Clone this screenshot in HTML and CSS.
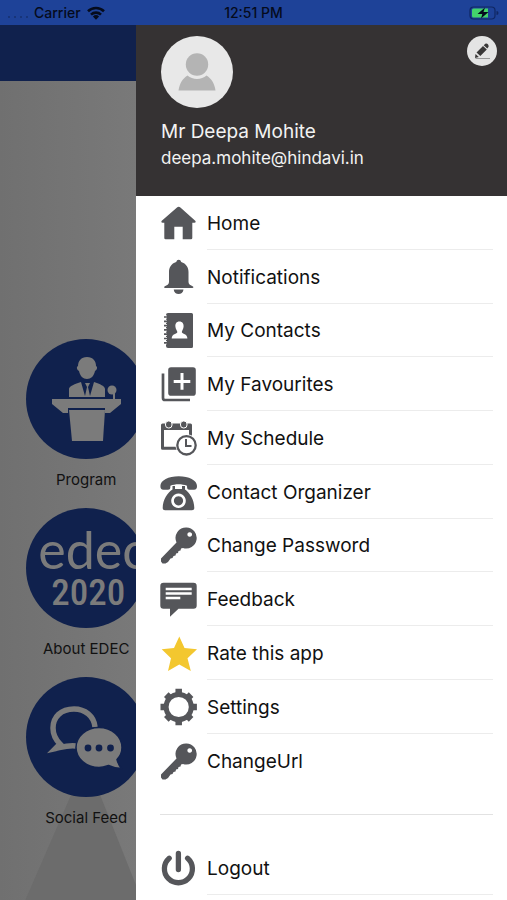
FILE: index.html
```html
<!DOCTYPE html>
<html lang="en">
<head>
    <meta charset="UTF-8">
    <meta name="viewport" content="width=device-width, initial-scale=1.0">
    <title>EDEC 2020</title>
    <link rel="stylesheet" href="styles.css">
</head>
<body>
    <svg class="defs" aria-hidden="true">
        <symbol id="icon-key" viewBox="0 0 38 38">
            <path fill-rule="evenodd" d="M26.500 1.500a10.500 10.500 0 1 1-3.500 20.500l-2 .5-.5 2-2 .5-.5 2-2 .5-.5 2-2 .5-1 2-2 .5-2.500 3.500-2.500 1.500H2.500L1 35.500v-3L16.500 16.500A10.500 10.500 0 0 1 26.500 1.500zM29.700 6.200a2.300 2.300 0 1 0 .01 0z"/>
        </symbol>
    </svg>

    <div class="status-bar">
        <div class="status-left">
            <span class="signal"><i></i><i></i><i></i><i></i></span>
            <span>Carrier</span>
            <svg class="wifi" viewBox="0 0 18 14">
                <path d="M1 5.300a11.500 11.500 0 0 1 16 0M4 8.600a7.200 7.200 0 0 1 10 0" fill="none" stroke="#050b1c" stroke-width="2.600"/>
                <path d="M5.900 10.500a4.500 4.500 0 0 1 6.200 0L9 13.800z" fill="#050b1c"/>
            </svg>
        </div>
        <span class="clock">12:51 PM</span>
        <div class="status-right">
            <svg class="battery" viewBox="0 0 30 14">
                <rect x="1" y="1" width="25" height="12" rx="3.500" fill="none" stroke="#102763" stroke-width="1.200"/>
                <path d="M4.500 2.500H19v9H4.500A1.500 1.500 0 0 1 3 10V4a1.500 1.500 0 0 1 1.500-1.500z" fill="#43d36b"/>
                <path d="M27.500 5v4a2 2 0 0 0 0-4z" fill="#102763"/>
                <path d="M16 1.500L8.500 8h4.800L12 12.500 19.500 6h-5z" fill="#050b1c"/>
            </svg>
        </div>
    </div>

    <div class="screen">
        <main class="home">
            <div class="home-header"></div>
            <div class="home-banner"></div>
            <div class="tiles">
                <a class="tile" href="#">
                    <span class="tile-circle">
                        <svg viewBox="0 0 120 120">
                            <path d="M61 18c6 0 9 4 9 9 2 1 1 4-1 5-1 5-4 8-8 8s-7-3-8-8c-2-1-3-4-1-5 0-5 3-9 9-9z"/>
                            <path d="M43 58V50c0-3 6-5 12-7l4 14 2-9-2-4h5l-2 4 2 9 4-14c6 2 11 4 11 7v8z"/>
                            <path d="M26 60h69v5l-11 9h-5v-5H42v5h-5l-11-9z"/>
                            <path d="M43 71h36l-2 31H46z"/>
                            <circle cx="86" cy="51" r="4.500"/>
                            <path d="M88 53v8" stroke="#7b7b7b" stroke-width="2"/>
                        </svg>
                    </span>
                    <span>Program</span>
                </a>
                <a class="tile" href="#">
                    <span class="tile-circle edec">
                        <span class="edec-name">edec</span>
                        <span class="edec-year">2020</span>
                    </span>
                    <span>About EDEC</span>
                </a>
                <a class="tile" href="#">
                    <span class="tile-circle">
                        <svg viewBox="0 0 120 120">
                            <path d="M69 50c-1-11-10-18-21-18-13 0-21 8-21 19 0 7 3 12 7 16l-4.500 4.500c7-1.500 13-3.500 20.500-2.500" fill="none" stroke="#7b7b7b" stroke-width="5.500"/>
                            <path d="M73 50.500c13 0 23 9 23 20 0 5-2 9-5 12 1 4 2 6 4.500 9-6 0-9-1-13-3-3 1-6 2-9.500 2-13 0-23-9-23-20s10-20 23-20z" stroke="#10214d" stroke-width="1.500"/>
                            <g fill="#10214d">
                                <circle cx="62" cy="71" r="3.400"/>
                                <circle cx="73" cy="71" r="3.400"/>
                                <circle cx="84.500" cy="71" r="3.400"/>
                            </g>
                        </svg>
                    </span>
                    <span>Social Feed</span>
                </a>
            </div>
        </main>

        <aside class="drawer">
            <header class="profile">
                <div class="profile-top">
                    <svg class="avatar" viewBox="0 0 72 72">
                        <circle cx="36" cy="36" r="36" fill="#e8e8e8"/>
                        <circle cx="36" cy="28.500" r="11.200" fill="#b4b4b4"/>
                        <path d="M17.500 54.500c1-7 4-12 9-15 5 4.500 14 4.500 19 0 5 3 8 8 9 15z" fill="#b4b4b4"/>
                    </svg>
                    <button class="edit" type="button" aria-label="Edit profile">
                        <svg viewBox="0 0 30 30">
                            <path d="M8 22l.500-4 3.300 3z" fill="#393737"/>
                            <path d="M9.500 16.500l6.500-6.500 3.800 3.500-6.500 6.500zM16.700 9.200l1.700-1.500c2-.5 3.500 1 3.200 3l-1.300 1.800z" fill="#393737"/>
                            <path d="M8.500 22.500h14.500" stroke="#999" stroke-width="1"/>
                        </svg>
                    </button>
                </div>
                <div class="name">Mr Deepa Mohite</div>
                <div class="email">deepa.mohite@hindavi.in</div>
            </header>

            <nav class="menu">
                <a class="menu-item" href="#">
                    <svg viewBox="0 0 38 38"><path d="M17 3.500q1.700-1.500 3.400 0L35.500 17q.8 1.700-1 1.800h-2.200V34q0 1.300-1.300 1.300h-8.300V22.700h-8.400v12.600H5.600q-1.300 0-1.300-1.300V18.800H2.500q-1.800-.3-1-1.800z"/></svg>
                    <span>Home</span>
                </a>
                <a class="menu-item" href="#">
                    <svg viewBox="0 0 38 38"><path d="M18.700 1.800q2 0 2.500 2.200c5 1.500 7.300 5.500 7.300 10v10c0 2.500 2 3 4.500 4.500.8.700.3 1.500-.5 1.500H5c-.8 0-1.300-.8-.5-1.500C7 27 9 26.500 9 24V14c0-4.500 2.200-8.500 7.200-10q.5-2.200 2.500-2.200zM13.700 31.500h9.800c-.5 6-9.300 6-9.800 0z"/></svg>
                    <span>Notifications</span>
                </a>
                <a class="menu-item" href="#">
                    <svg viewBox="0 0 38 38">
                        <path fill-rule="evenodd" d="M8 2h23.500q1.500 0 1.500 1.500v32q0 1.500-1.500 1.500H8q-2 0-2-2V4q0-2 2-2zM19.400 10.500c-3 0-4.200 2.200-4 5 .2 2.500 1.500 3.500 2 5.500-.3 2-5.700 1.700-5.700 6.500h15.700c0-4.800-5.200-4.500-5.600-6.500.4-2 1.600-3 1.800-5.500.2-2.800-1.200-5-4.200-5z"/>
                        <path d="M3.500 6h3.500M3.500 10.300h3.500M3.500 14.600h3.500M3.500 18.900h3.500M3.500 23.200h3.500M3.500 27.500h3.500M3.500 31.800h3.500" fill="none" stroke="#fff" stroke-width="3"/>
                        <path d="M4 6h4M4 10.300h4M4 14.600h4M4 18.900h4M4 23.200h4M4 27.500h4M4 31.800h4" fill="none" stroke="#55565a" stroke-width="1.700"/>
                    </svg>
                    <span>My Contacts</span>
                </a>
                <a class="menu-item" href="#">
                    <svg viewBox="0 0 38 38"><path fill-rule="evenodd" d="M11 2.300h22q2.800 0 2.800 2.800v22.800q0 2.800-2.800 2.800H11q-2.800 0-2.800-2.800V5.100q0-2.800 2.800-2.800zM20.500 8v6.900h-6.800v3h6.800v6.900h3v-6.900h6.800v-3h-6.800V8z"/><path d="M3 8.500v24.500q0 2 2 2h25" fill="none" stroke="#55565a" stroke-width="2.700"/></svg>
                    <span>My Favourites</span>
                </a>
                <a class="menu-item" href="#">
                    <svg viewBox="0 0 38 38">
                        <path fill-rule="evenodd" d="M2.500 4.500h28q1.500 0 1.500 1.500v12h-3v-7H4v16.700h14v3H2.500Q1 30.700 1 29.200V6q0-1.500 1.500-1.500z"/>
                        <g stroke="#fff" stroke-width="1"><rect x="5.500" y="2" width="6.500" height="7" rx="3"/><rect x="20.500" y="2" width="6.500" height="7" rx="3"/></g>
                        <circle cx="26.500" cy="26.300" r="11" fill="#fff"/>
                        <circle cx="26.500" cy="26.300" r="9.200" fill="none" stroke="#55565a" stroke-width="2.300"/>
                        <path d="M26 20v7h5.500" fill="none" stroke="#55565a" stroke-width="2"/>
                    </svg>
                    <span>My Schedule</span>
                </a>
                <a class="menu-item" href="#">
                    <svg viewBox="0 0 38 38"><path d="M18.700 3.300C29 3.300 37 7.500 37 13c0 2.500-.8 3.700-3 3.700h-4.500c-2 0-2.500-1-2.500-4-5-2-12-2-16.600 0 0 3-.5 4-2.500 4H3.400c-2.200 0-3-1.200-3-3.700C.4 7.500 8.500 3.300 18.700 3.300z"/><path fill-rule="evenodd" d="M12.500 13h2.500v3h7v-3h3v3.500c4.500 3 9.300 10 9.300 18.500q0 2.300-2.300 2.300H5q-2.300 0-2.300-2.300c0-8.500 5-15.500 9.800-18.500zM18.500 20.500a7.300 7.300 0 1 0 .01 0zM18.500 23.200a4.600 4.600 0 1 1-.01 0z"/></svg>
                    <span>Contact Organizer</span>
                </a>
                <a class="menu-item" href="#">
                    <svg><use href="#icon-key"/></svg>
                    <span>Change Password</span>
                </a>
                <a class="menu-item" href="#">
                    <svg viewBox="0 0 38 38"><path d="M3.500 2.700h30q3.200 0 3.200 3.200v19.600q0 3.200-3.200 3.200H18.500L10 36.700v-8H3.500Q.3 28.700.3 25.500V5.900q0-3.200 3.200-3.200z"/><path d="M5.700 9h26M5.700 13.500h26M5.700 18h14.600" fill="none" stroke="#fff" stroke-width="2.500"/></svg>
                    <span>Feedback</span>
                </a>
                <a class="menu-item" href="#">
                    <svg viewBox="0 0 38 38"><path class="star" d="M19.300 2.500l5.200 11.500 12.500 1.300-9.500 9L30.800 37l-11.500-6.500L8 37l3-12.700-9.300-9L14 14z"/></svg>
                    <span>Rate this app</span>
                </a>
                <a class="menu-item" href="#">
                    <svg viewBox="0 0 38 38">
                        <circle cx="18.700" cy="19" r="12.600" fill="none" stroke="#55565a" stroke-width="5"/>
                        <g stroke="#55565a" stroke-width="6.500">
                            <path d="M18.700.8v5M18.700 32.200v5M.5 19h5M31.900 19h5"/>
                            <path d="M6.300 6.600l3.500 3.500M27.600 27.900l3.500 3.500M6.300 31.400l3.500-3.500M27.600 10.100l3.500-3.500"/>
                        </g>
                    </svg>
                    <span>Settings</span>
                </a>
                <a class="menu-item" href="#">
                    <svg><use href="#icon-key"/></svg>
                    <span>ChangeUrl</span>
                </a>
                <hr class="divider">
                <a class="menu-item" href="#">
                    <svg viewBox="0 0 38 38"><path d="M9.200 9.200a14 14 0 1 0 18.400 0M18.400 4.500v16" fill="none" stroke="#55565a" stroke-width="5.300" stroke-linecap="round"/></svg>
                    <span>Logout</span>
                </a>
            </nav>
        </aside>
    </div>
</body>
</html>
```
FILE: styles.css
```css
* {
    box-sizing: border-box;
}

body {
    font-family: Inter, "Liberation Sans", sans-serif;
    margin: 0;
    display: flex;
    flex-direction: column;
    min-height: 100vh;
    background: #757575;
    color: #111;
}

a {
    color: inherit;
    text-decoration: none;
}

.defs {
    display: none;
}

/* status bar */
.status-bar {
    display: grid;
    grid-template-columns: 1fr auto 1fr;
    align-items: center;
    height: 25px;
    padding: 0 8px;
    background: #1e4298;
    color: #050b1c;
    font-size: 14px;
    font-weight: 500;
}

.status-left {
    display: flex;
    align-items: center;
    gap: 6px;
}

.signal {
    display: flex;
    gap: 4px;
    padding-top: 8px;
}

.signal i {
    width: 2px;
    height: 2px;
    background: #173479;
}

.wifi {
    width: 18px;
    height: 14px;
}

.status-right {
    display: flex;
    justify-content: flex-end;
}

.battery {
    width: 30px;
    height: 14px;
}

.screen {
    position: relative;
    flex-grow: 1;
    display: flex;
    flex-direction: column;
}

/* dimmed home page under the drawer */
.home {
    position: relative;
    flex-grow: 1;
    background: linear-gradient(90deg, #707070, #7a7a7a 30%);
}

.home::before {
    content: "";
    position: absolute;
    inset: 0;
    background: #6c6c6c;
    clip-path: polygon(17% 84%, 5% 100%, 28% 100%);
}

.home-header {
    height: 56px;
    background: #10214d;
}

.home-banner {
    height: 258px;
}

.tiles {
    position: relative;
    width: 34%;
    display: flex;
    flex-direction: column;
    gap: 18px;
}

.tile {
    display: flex;
    flex-direction: column;
    align-items: center;
    gap: 11px;
    font-size: 15px;
    line-height: 20px;
}

.tile-circle {
    width: 120px;
    height: 120px;
    border-radius: 50%;
    background: #10214d;
    fill: #7b7b7b;
    color: #7b7b7b;
}

.edec {
    display: flex;
    flex-direction: column;
    padding: 17px 0 0 12px;
}

.edec-name {
    font-family: Lato, sans-serif;
    font-size: 52px;
    line-height: 48px;
}

.edec-year {
    font-family: "Roboto Condensed", Roboto, sans-serif;
    font-size: 37px;
    font-weight: 500;
    line-height: 40px;
    padding-left: 13px;
}

/* drawer */
.drawer {
    position: absolute;
    inset: 0 0 0 136px;
    display: flex;
    flex-direction: column;
    background: #fff;
}

.profile {
    padding: 11px 10px 0 25px;
    height: 171px;
    background: #353233;
    color: #f2f2f2;
}

.profile-top {
    display: flex;
    justify-content: space-between;
    align-items: flex-start;
}

.avatar {
    width: 72px;
    height: 72px;
}

.edit {
    width: 30px;
    height: 30px;
    padding: 0;
    border: none;
    border-radius: 50%;
    background: #e4e4e4;
    cursor: pointer;
}

.edit svg {
    display: block;
}

.name {
    margin-top: 10px;
    font-size: 19px;
    line-height: 28px;
}

.email {
    font-size: 17px;
    line-height: 24px;
}

.menu {
    flex-grow: 1;
    display: grid;
    grid-auto-rows: 1fr;
    padding: 0 14px 5px 24px;
}

.menu-item {
    display: flex;
    align-items: center;
    gap: 9px;
    font-size: 19px;
}

.menu-item svg {
    width: 38px;
    height: 38px;
    fill: #55565a;
}

.menu-item .star {
    fill: #f3c72f;
}

.menu-item span {
    flex-grow: 1;
    height: 100%;
    display: flex;
    align-items: center;
    padding-top: 2px;
    border-bottom: 1px solid #ececec;
}

.menu-item:has(+ .divider) span {
    border-bottom: none;
}

.divider {
    width: 100%;
    margin: 0;
    align-self: center;
    border: none;
    border-top: 1px solid #e2e2e2;
}
```
